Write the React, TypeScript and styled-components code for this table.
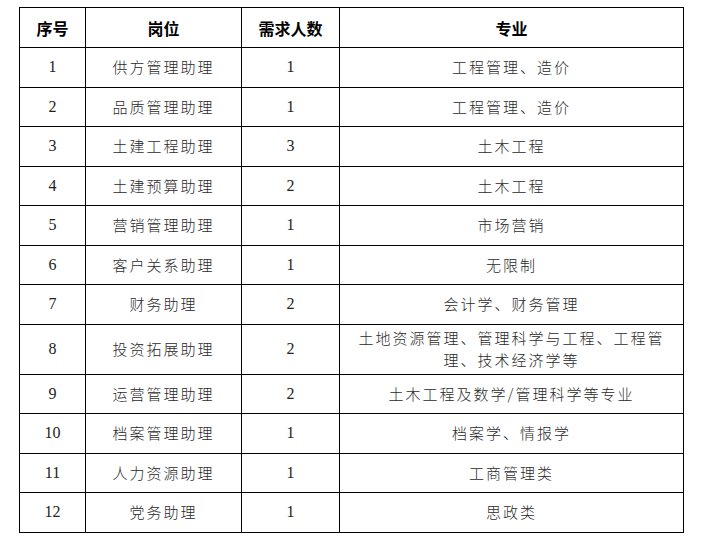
import React from "react";
import styled, { createGlobalStyle } from "styled-components";

const Global = createGlobalStyle`
  html, body {
    margin: 0;
    padding: 0;
    background: #ffffff;
  }
`;

const Page = styled.div`
  padding: 7px 0 0 19px;
`;

const Table = styled.table`
  width: 664px;
  border-collapse: collapse;
  table-layout: fixed;
  border: 1px solid #000;
`;

const Th = styled.th`
  height: 39px;
  border: 1px solid #000;
  padding: 0;
  font-family: "Noto Sans CJK SC", sans-serif;
  font-weight: 700;
  font-size: 16px;
  color: #000;
  text-align: center;
  vertical-align: middle;
`;

type RowProps = { $tall?: boolean };

const Row = styled.tr<RowProps>`
  height: ${(p) => (p.$tall ? "50px" : "39.5px")};
`;

const Num = styled.td`
  border: 1px solid #000;
  padding: 0;
  font-family: "Liberation Serif", "Times New Roman", serif;
  font-size: 16px;
  color: #222;
  text-align: center;
  vertical-align: middle;
`;

const Text = styled.td`
  border: 1px solid #000;
  padding: 0 14px;
  font-family: "Noto Sans CJK SC", sans-serif;
  font-weight: 300;
  font-size: 15px;
  letter-spacing: 2px;
  line-height: 22px;
  color: #2a2a2a;
  text-align: center;
  vertical-align: middle;
`;

const rows: [string, string, string, string][] = [
  ["1", "供方管理助理", "1", "工程管理、造价"],
  ["2", "品质管理助理", "1", "工程管理、造价"],
  ["3", "土建工程助理", "3", "土木工程"],
  ["4", "土建预算助理", "2", "土木工程"],
  ["5", "营销管理助理", "1", "市场营销"],
  ["6", "客户关系助理", "1", "无限制"],
  ["7", "财务助理", "2", "会计学、财务管理"],
  ["8", "投资拓展助理", "2", "土地资源管理、管理科学与工程、工程管理、技术经济学等"],
  ["9", "运营管理助理", "2", "土木工程及数学/管理科学等专业"],
  ["10", "档案管理助理", "1", "档案学、情报学"],
  ["11", "人力资源助理", "1", "工商管理类"],
  ["12", "党务助理", "1", "思政类"],
];

export default function App() {
  return (
    <Page>
      <Global />
      <Table>
        <colgroup>
          <col style={{ width: 66 }} />
          <col style={{ width: 156 }} />
          <col style={{ width: 98 }} />
          <col style={{ width: 344 }} />
        </colgroup>
        <thead>
          <tr>
            <Th>序号</Th>
            <Th>岗位</Th>
            <Th>需求人数</Th>
            <Th>专业</Th>
          </tr>
        </thead>
        <tbody>
          {rows.map(([no, post, count, major]) => (
            <Row key={no} $tall={major.length > 20}>
              <Num>{no}</Num>
              <Text>{post}</Text>
              <Num>{count}</Num>
              <Text>{major}</Text>
            </Row>
          ))}
        </tbody>
      </Table>
    </Page>
  );
}
